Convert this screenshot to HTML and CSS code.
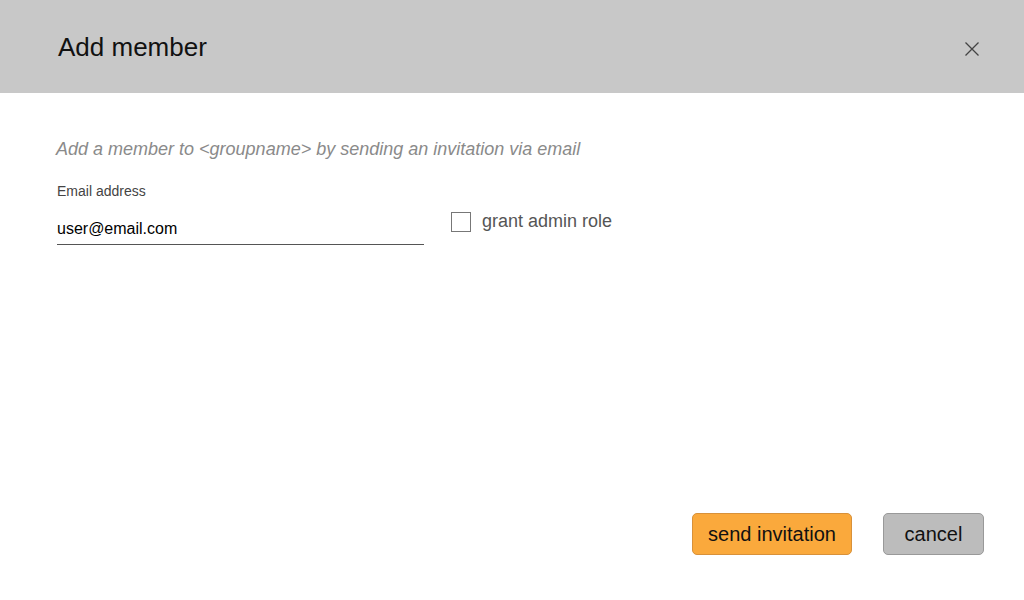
FILE: index.html
```html
<!DOCTYPE html>
<html>
<head>
<meta charset="utf-8">
<link rel="stylesheet" href="styles.css">
</head>
<body>
<div class="dialog">
  <header class="dlg-head">
    <h1 class="dlg-title">Add member</h1>
    <button class="close" aria-label="close">
      <svg width="16" height="16" viewBox="0 0 16 16"><path d="M1.5 1.5 L14.5 14.5 M14.5 1.5 L1.5 14.5" stroke="#444" stroke-width="1.3" fill="none"/></svg>
    </button>
  </header>
  <main class="dlg-body">
    <p class="intro">Add a member to &lt;groupname&gt; by sending an invitation via email</p>
    <div class="form-row">
      <div class="field">
        <label class="field-label">Email address</label>
        <div class="field-input">user@email.com</div>
      </div>
      <label class="check">
        <span class="box"></span>
        <span class="check-text">grant admin role</span>
      </label>
    </div>
  </main>
  <footer class="dlg-foot">
    <button class="btn btn-primary">send invitation</button>
    <button class="btn btn-secondary">cancel</button>
  </footer>
</div>
</body>
</html>
```
FILE: styles.css
```css
html, body { margin: 0; padding: 0; }
body {
  width: 1024px;
  height: 600px;
  background: #fff;
  font-family: "Liberation Sans", Arial, sans-serif;
  overflow: hidden;
}
.dialog {
  height: 600px;
  display: flex;
  flex-direction: column;
}
.dlg-head {
  height: 93px;
  background: #c8c8c8;
  display: flex;
  align-items: center;
  justify-content: space-between;
  padding: 0 44px 0 58px;
  box-sizing: border-box;
}
.dlg-title {
  margin: 0;
  font-size: 26px;
  font-weight: normal;
  color: #111;
  position: relative;
  top: 1px;
}
.close {
  border: 0;
  background: none;
  padding: 0;
  width: 16px;
  height: 16px;
  display: flex;
  margin-top: 4px;
}
.dlg-body {
  flex: 1;
  padding: 46px 40px 0 56px;
}
.intro {
  margin: 0;
  font-size: 18px;
  font-style: italic;
  color: #8a8a8a;
}
.form-row {
  display: flex;
  align-items: flex-start;
  margin-top: 23px;
}
.field {
  width: 367px;
  margin-left: 1px;
}
.field-label {
  display: block;
  font-size: 14px;
  color: #444;
}
.field-input {
  margin-top: 21px;
  font-size: 16px;
  color: #000;
  padding-bottom: 6px;
  border-bottom: 1px solid #555;
}
.check {
  display: flex;
  align-items: center;
  margin-left: 27px;
  margin-top: 28px;
}
.box {
  width: 18px;
  height: 18px;
  border: 1px solid #777;
  background: #fff;
}
.check-text {
  margin-left: 11px;
  font-size: 18px;
  color: #555;
}
.dlg-foot {
  display: flex;
  justify-content: flex-end;
  padding: 0 40px 45px 0;
  gap: 31px;
}
.btn {
  height: 42px;
  border-radius: 5px;
  font-family: "Liberation Sans", Arial, sans-serif;
  font-size: 20px;
  color: #111;
  padding: 0;
  box-sizing: border-box;
}
.btn-primary {
  width: 160px;
  background: #faa93c;
  border: 1px solid #d8913a;
}
.btn-secondary {
  width: 101px;
  background: #bcbcbc;
  border: 1px solid #999;
}
```
